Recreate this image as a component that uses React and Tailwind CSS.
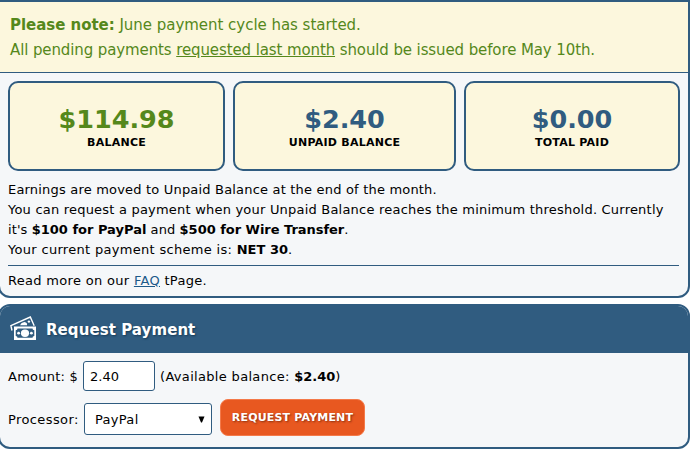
import React from "react";

const balances = [
  { label: "BALANCE", value: "$114.98", width: "w-[217px]", color: "text-[#55881b]" },
  { label: "UNPAID BALANCE", value: "$2.40", width: "w-[223px]", color: "text-[#305c80]" },
  { label: "TOTAL PAID", value: "$0.00", width: "w-[216px]", color: "text-[#305c80]" },
];

const MoneyIcon = () => (
  <svg className="-mt-1" width="26" height="24" viewBox="0 0 26 24" fill="none">
    {/* back note */}
    <path d="M2 14.5 L0.9 9.6 L20.3 1 L24.2 9.8" stroke="#fff" strokeWidth="1.4" />
    <path d="M10 9.2 Q11 6.6 14.5 6 Q17.5 6.6 17 9.2 Z" fill="#fff" />
    <circle cx="18.9" cy="5.6" r="1.2" fill="#fff" />
    {/* front note */}
    <rect x="4" y="10.5" width="22" height="13.5" fill="#fff" />
    <path
      d="M7.5 12.5 H22.5 Q22.5 14.2 24.3 14.2 V20 Q22.5 20 22.5 21.8 H7.5 Q7.5 20 5.7 20 V14.2 Q7.5 14.2 7.5 12.5 Z"
      fill="#305c80"
    />
    <ellipse cx="15" cy="17.2" rx="4.1" ry="3.7" fill="#fff" />
    <circle cx="8.6" cy="17.2" r="1.4" fill="#fff" />
    <circle cx="21.4" cy="17.2" r="1.4" fill="#fff" />
  </svg>
);

const BalanceCard = ({ label, value, width, color }) => (
  <div
    className={`h-[90px] ${width} rounded-[10px] border-2 border-[#305c80] bg-[#fcf7dd] pt-[21px] text-center font-bold`}
  >
    <div className={`text-[25.5px] leading-[31px] ${color}`}>{value}</div>
    <div className="pt-px text-[11px] leading-[14px] tracking-[0.25px] text-black">{label}</div>
  </div>
);

const Overview = () => (
  <section className="h-[298px] overflow-hidden rounded-b-[12px] border-2 border-[#305c80] bg-[#f5f7f9]">
    <div className="h-[71px] border-b border-[#305c80] bg-[#fcf7dd] pt-[11px] pl-[10px] text-[15px] leading-[25px] text-[#55881b]">
      <p className="tracking-[-0.03px]">
        <b>Please note:</b> June payment cycle has started.
      </p>
      <p className="tracking-[-0.11px]">
        All pending payments <span className="underline">requested last month</span> should be issued before May 10th.
      </p>
    </div>

    <div className="flex gap-2 px-2 pt-2">
      {balances.map((item) => (
        <BalanceCard key={item.label} {...item} />
      ))}
    </div>

    <div className="mr-[9px] ml-2 border-b border-[#305c80] pt-[9px] pb-[5px] leading-5 whitespace-nowrap">
      <p className="tracking-[0.19px]">Earnings are moved to Unpaid Balance at the end of the month.</p>
      <p className="tracking-[0.21px]">
        You can request a payment when your Unpaid Balance reaches the minimum threshold. Currently
      </p>
      <p className="tracking-[0.1px]">
        it's <b className="tracking-normal">$100 for PayPal</b> and{" "}
        <b className="tracking-[-0.03px]">$500 for Wire Transfer</b>.
      </p>
      <p className="tracking-[0.31px]">
        Your current payment scheme is: <b className="tracking-normal">NET 30</b>.
      </p>
    </div>

    <p className="pt-[5px] pl-2 leading-5 tracking-[0.31px]">
      Read more on our <a href="#" className="text-[#1c5a8a] underline">FAQ</a> tPage.
    </p>
  </section>
);

const RequestPayment = () => (
  <section className="mt-[6px] h-[145px] overflow-hidden rounded-[12px] border-2 border-[#305c80] bg-[#f5f7f9]">
    <header className="flex h-[47px] items-center bg-[#305c80] pl-[10px]">
      <MoneyIcon />
      <h2 className="pt-px pl-[10px] text-[15px] font-bold tracking-[0.07px] text-white [text-shadow:1px_1px_2px_#173a55]">
        Request Payment
      </h2>
    </header>

    <div className="flex items-center pt-2 pl-2">
      <label htmlFor="amount" className="w-[75px] pt-0.5 tracking-[0.25px]">Amount: $</label>
      <input
        id="amount"
        defaultValue="2.40"
        className="h-[30px] w-[72px] rounded-[3px] border border-[#305c80] bg-white px-[6px] text-black outline-none"
      />
      <span className="pt-0.5 pl-[5px] tracking-[0.32px]">
        (Available balance: <b className="tracking-normal">$2.40</b>)
      </span>
    </div>

    <div className="flex items-center pt-2 pl-2">
      <span className="w-[76px] pt-1 tracking-[0.4px]">Processor:</span>
      <button className="mt-[3px] flex h-8 w-[128px] items-center justify-between rounded-[3px] border border-[#305c80] bg-white pt-px pr-[6px] pl-[10px] tracking-[0.3px] text-black">
        PayPal
        <svg className="-mt-px" width="7" height="7" viewBox="0 0 7 7">
          <path d="M0.5 0.5 H6.5 L4 6.5 H3 Z" fill="#000" />
        </svg>
      </button>
      <button className="ml-2 h-[37px] w-[145px] rounded-[8px] border border-[#f47a4a] bg-[#e85820] pt-[2px] text-[11px] font-bold tracking-[0.18px] text-white [text-shadow:1px_1px_2px_#8a3010]">
        REQUEST PAYMENT
      </button>
    </div>
  </section>
);

const App = () => (
  <div className="h-[454px] w-[696px] overflow-hidden bg-white font-['Verdana','DejaVu_Sans',sans-serif] text-[13px] text-black">
    {/* left border sits past the edge of the page */}
    <div className="-ml-[2px] w-[692px]">
      <Overview />
      <RequestPayment />
    </div>
  </div>
);

export default App;
